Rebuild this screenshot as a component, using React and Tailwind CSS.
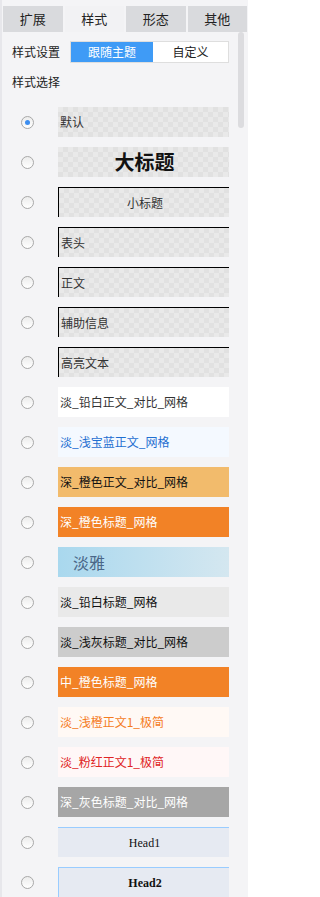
import React, { useState } from 'react';

const tabs = ['扩展', '样式', '形态', '其他'];

const checker =
  'bg-[repeating-conic-gradient(#e1e1e1_0_25%,#e9e9e9_0_50%)] bg-[length:10px_10px]';

const styles = [
  { name: '默认', box: checker, text: 'text-[#333]' },
  { name: '大标题', box: checker, text: 'text-[#111] text-[20px] font-bold justify-center' },
  { name: '小标题', box: `${checker} border-t border-l border-black`, text: 'text-[#333] justify-center' },
  { name: '表头', box: `${checker} border-t border-l border-black`, text: 'text-[#333]' },
  { name: '正文', box: `${checker} border-t border-l border-black`, text: 'text-[#333]' },
  { name: '辅助信息', box: `${checker} border-t border-l border-black`, text: 'text-[#333]' },
  { name: '高亮文本', box: `${checker} border-t border-l border-black`, text: 'text-[#333]' },
  { name: '淡_铅白正文_对比_网格', box: 'bg-white', text: 'text-[#333]' },
  { name: '淡_浅宝蓝正文_网格', box: 'bg-[#f4f9ff]', text: 'text-[#1f6fd1]' },
  { name: '深_橙色正文_对比_网格', box: 'bg-[#f2bb6c]', text: 'text-[#111]' },
  { name: '深_橙色标题_网格', box: 'bg-[#f28226]', text: 'text-white' },
  { name: '淡雅', box: 'bg-gradient-to-r from-[#a9d8ee] to-[#d4e7f0]', text: 'text-[#4a6788] text-[16px] pl-[15px]' },
  { name: '淡_铅白标题_网格', box: 'bg-[#e9e9e9]', text: 'text-[#111]' },
  { name: '淡_浅灰标题_对比_网格', box: 'bg-[#cccccc]', text: 'text-[#111]' },
  { name: '中_橙色标题_网格', box: 'bg-[#f28226]', text: 'text-white' },
  { name: '淡_浅橙正文1_极简', box: 'bg-[#fff9f5]', text: 'text-[#f57c1f]' },
  { name: '淡_粉红正文1_极简', box: 'bg-[#fff7f7]', text: 'text-[#e02424]' },
  { name: '深_灰色标题_对比_网格', box: 'bg-[#a6a6a6]', text: 'text-white' },
  { name: 'Head1', box: 'bg-[#e6eaf2] border-t border-[#99ccff]', text: 'text-[#111] justify-center font-["Liberation_Serif",serif]' },
  { name: 'Head2', box: 'bg-[#e6eaf2] border-t border-l border-[#99ccff]', text: 'text-[#111] justify-center font-bold font-["Liberation_Serif",serif]' },
];

const Radio = ({ checked }) => (
  <span className="w-[13px] h-[13px] rounded-full border border-[#a8a8a8] bg-gradient-to-b from-[#ececec] to-white flex items-center justify-center shrink-0">
    {checked && <span className="w-[5px] h-[5px] rounded-full bg-[#3d8ef0]" />}
  </span>
);

const App = () => {
  const [tab, setTab] = useState(1);
  const [mode, setMode] = useState('follow');
  const [selected, setSelected] = useState(0);

  return (
    <div className="w-[248px] h-[897px] overflow-hidden bg-[#f4f4f6] flex font-['Noto_Sans_CJK_SC',sans-serif] text-[12px] text-[#222]">
      <div className="w-[2px] shrink-0 bg-[#e7e7eb]" />
      <div className="flex-1 flex flex-col min-w-0">
        <div className="pt-[6px] pl-[1px] pr-[1px] grid grid-cols-4 gap-[2px] h-[32px]">
          {tabs.map((t, i) => (
            <button
              key={t}
              onClick={() => setTab(i)}
              className={`h-[26px] flex items-center justify-center text-[13px] text-[#222] ${
                tab === i ? 'bg-[#f2f2f4]' : 'bg-[#d9dadd]'
              }`}
            >
              {t}
            </button>
          ))}
        </div>
        <div className="flex flex-1 min-h-0">
          <div className="flex-1 min-w-0 pr-[7px]">
            <div className="flex items-center h-[21px] mt-[9px]">
              <span className="w-[68px] pl-[10px] shrink-0">样式设置</span>
              <div className="flex w-[165px] h-[22px] border border-[#dedede] bg-white">
                <button
                  onClick={() => setMode('follow')}
                  className={`w-[82px] flex items-center justify-center ${
                    mode === 'follow' ? 'bg-[#3f9bf6] text-white' : 'text-[#222]'
                  }`}
                >
                  跟随主题
                </button>
                <button
                  onClick={() => setMode('custom')}
                  className={`flex-1 flex items-center justify-center ${
                    mode === 'custom' ? 'bg-[#3f9bf6] text-white' : 'text-[#222]'
                  }`}
                >
                  自定义
                </button>
              </div>
            </div>
            <div className="pl-[10px] mt-[10px] h-[20px] flex items-center">样式选择</div>
            <div className="mt-[15px] flex flex-col gap-[10px]">
              {styles.map((s, i) => (
                <div key={s.name} className="flex items-center cursor-pointer" onClick={() => setSelected(i)}>
                  <div className="w-[56px] pl-[19px] shrink-0 flex">
                    <Radio checked={selected === i} />
                  </div>
                  <div className={`flex-1 h-[30px] min-w-0 ${s.box}`}>
                    <div className={`h-full flex items-center pl-[2px] whitespace-nowrap ${s.text}`}>{s.name}</div>
                  </div>
                </div>
              ))}
            </div>
          </div>
          <div className="w-[12px] shrink-0 pl-[2px]">
            <div className="w-[6px] h-[96px] rounded-full bg-[#dcdcdf]" />
          </div>
        </div>
      </div>
    </div>
  );
};

export default App;
